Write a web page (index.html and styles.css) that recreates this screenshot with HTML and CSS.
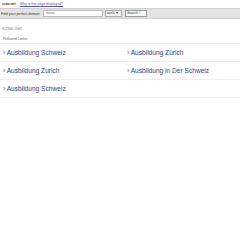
FILE: index.html
```html
<!DOCTYPE html>
<html>
<head>
<meta charset="utf-8">
<link rel="stylesheet" href="styles.css">
</head>
<body>
<div class="top">
  <span class="domain">sztw.net</span>
  <a class="why" href="#">Why is this page displayed?</a>
</div>
<div class="searchbar">
  <span class="label">Find your perfect domain</span>
  <span class="input">sssss</span>
  <span class="select">zürih <span class="arr">▾</span></span>
  <span class="btn">Search ›</span>
</div>
<div class="title">sztw.net</div>
<div class="related">Related Links</div>
<div class="links">
  <div class="row">
    <a class="link" href="#">› Ausbildung Schweiz</a>
    <a class="link" href="#">› Ausbildung Zürich</a>
  </div>
  <div class="row">
    <a class="link" href="#">› Ausbildung Zurich</a>
    <a class="link" href="#">› Ausbildung in Der Schweiz</a>
  </div>
  <div class="row">
    <a class="link" href="#">› Ausbildung Schweiz</a>
  </div>
</div>
</body>
</html>
```
FILE: styles.css
```css
html, body {
  margin: 0;
  padding: 0;
  background: #fff;
  font-family: "Liberation Sans", Arial, sans-serif;
}
.top {
  height: 8px;
  display: flex;
  align-items: center;
  gap: 4px;
  padding-left: 2px;
  font-size: 3.5px;
}
.domain {
  font-weight: bold;
  color: #333;
}
.why {
  color: #55a;
  text-decoration: underline;
}
.searchbar {
  height: 9px;
  background: #e3e3e3;
  border-top: 1px solid #d0d0d0;
  border-bottom: 1px solid #d0d0d0;
  display: flex;
  align-items: center;
  padding-left: 1px;
  font-size: 3.5px;
  color: #333;
}
.label {
  width: 42px;
}
.input {
  width: 56px;
  height: 5px;
  background: #fff;
  border: 1px solid #bbb;
  line-height: 5px;
  padding-left: 2px;
  color: #666;
  margin-right: 2px;
}
.select {
  width: 14px;
  height: 5px;
  border: 1px solid #aaa;
  background: #f4f4f4;
  line-height: 5px;
  padding-left: 1px;
  margin-right: 3px;
}
.btn {
  width: 19px;
  height: 5px;
  border: 1px solid #999;
  background: #f8f8f8;
  line-height: 5px;
  padding-left: 1px;
}
.title {
  margin-top: 6px;
  padding-left: 2px;
  font-size: 5.5px;
  color: #999;
}
.related {
  margin-top: 5px;
  padding-left: 3px;
  font-size: 4px;
  color: #666;
}
.links {
  margin-top: 2px;
  border-top: 1px solid #f0f0f0;
}
.row {
  display: grid;
  grid-template-columns: 124px 1fr;
  height: 17px;
  align-items: center;
  border-bottom: 1px solid #eee;
}
.link {
  padding-left: 3px;
  font-size: 6.6px;
  color: #34437e;
  text-decoration: none;
}
```
